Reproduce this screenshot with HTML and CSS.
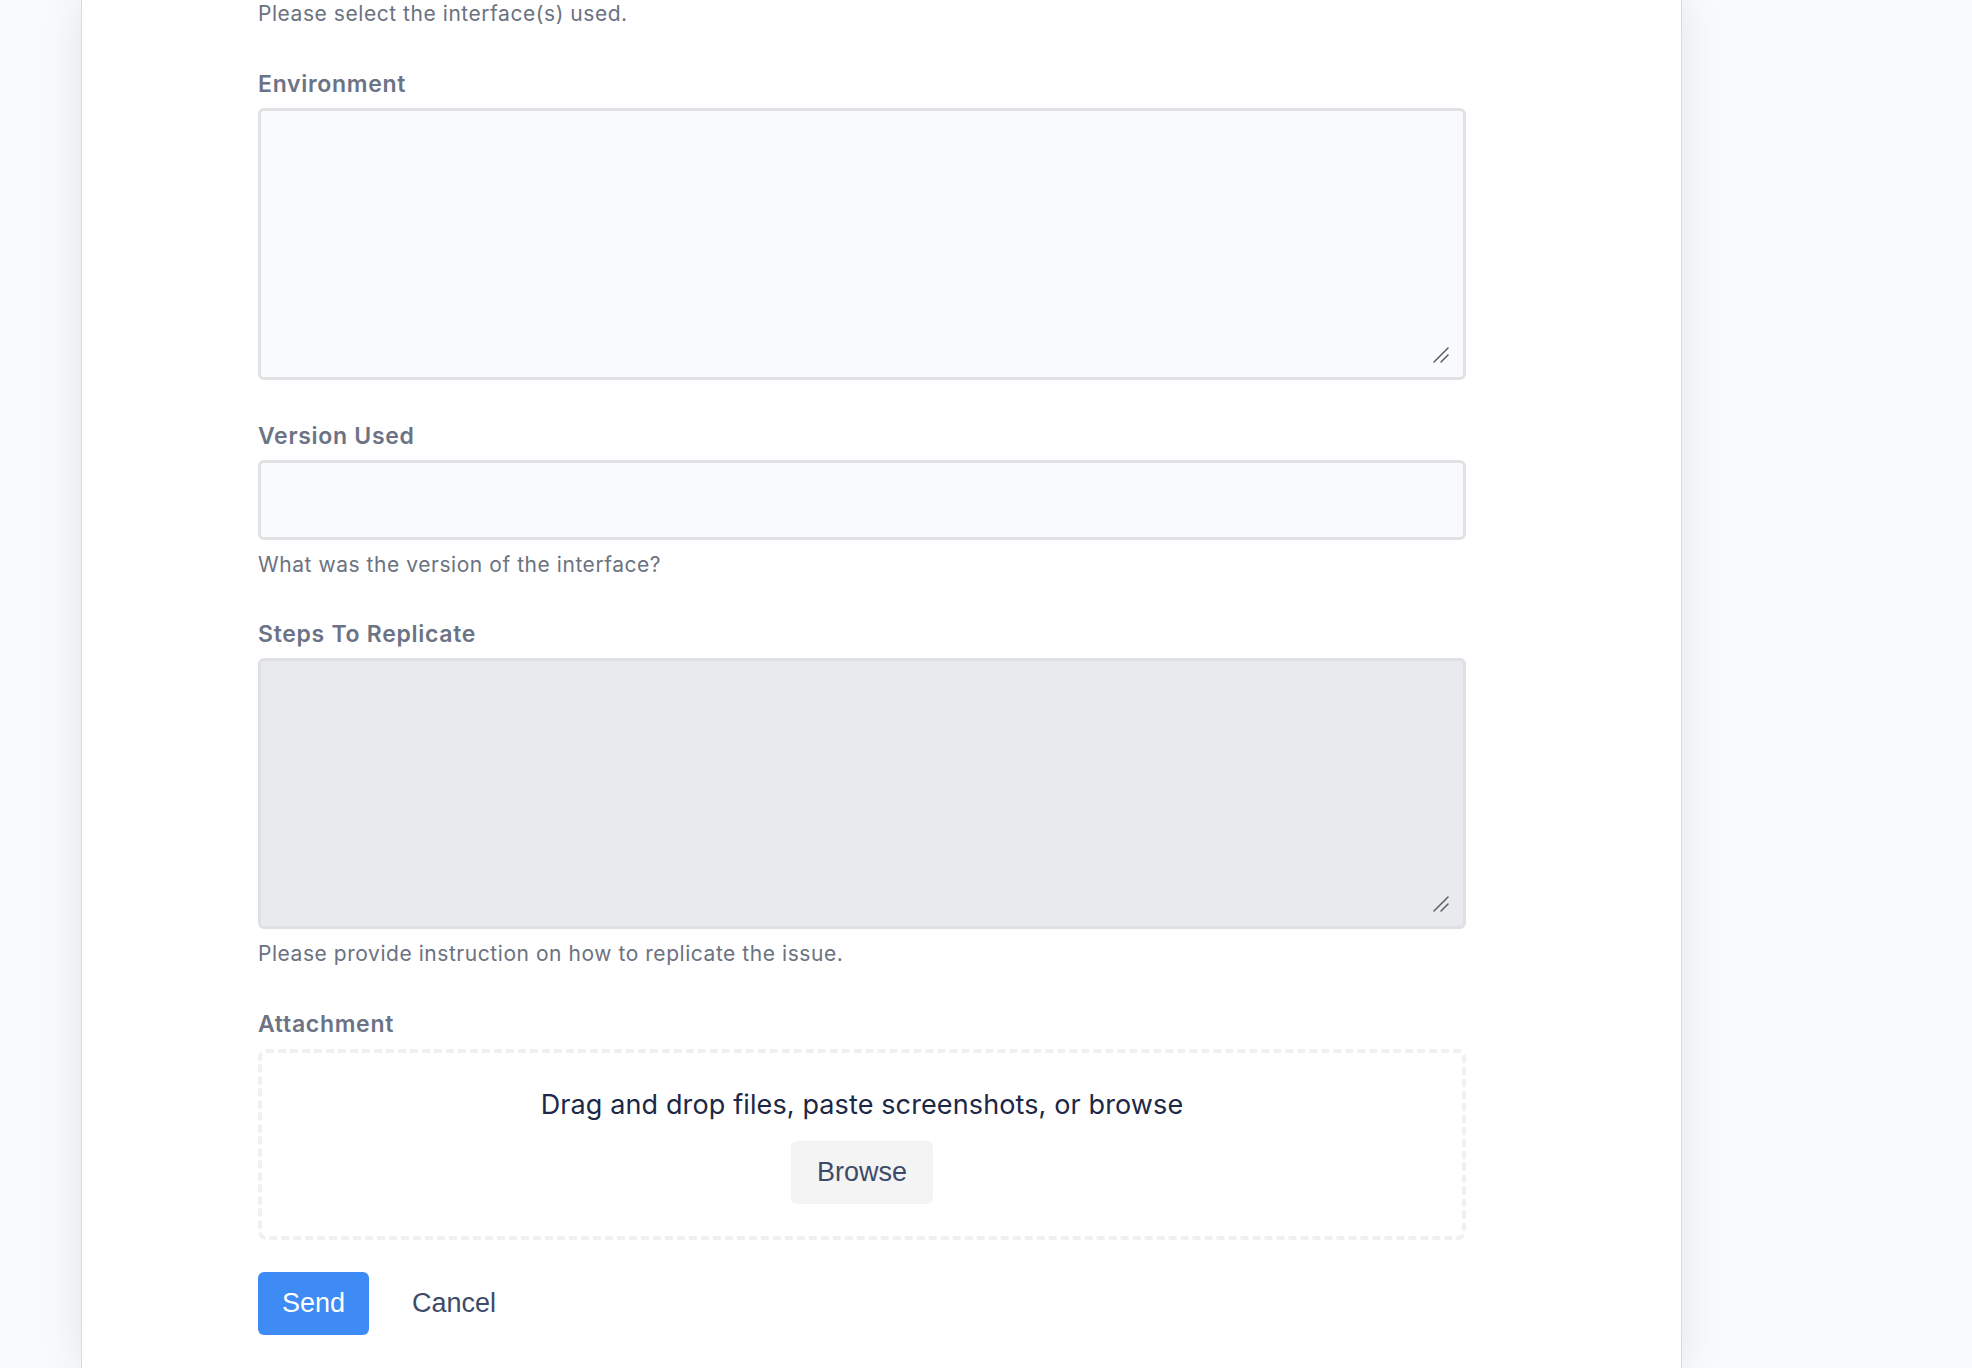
FILE: index.html
```html
<!DOCTYPE html>
<html lang="en">
<head>
<meta charset="utf-8">
<title>Report an issue</title>
<link rel="stylesheet" href="styles.css">
</head>
<body>
<div class="page">
  <main class="panel">
    <form class="form">
      <p class="help help-top">Please select the interface(s) used.</p>

      <div class="field">
        <label class="label" for="env">Environment</label>
        <div class="textarea-wrap">
          <textarea id="env" class="control textarea"></textarea>
          <svg class="grip" viewBox="0 0 16 16" aria-hidden="true">
            <path d="M1 15 L15 1" />
            <path d="M8 15 L15 8" />
          </svg>
        </div>
      </div>

      <div class="field">
        <label class="label" for="ver">Version Used</label>
        <input id="ver" class="control input" type="text">
        <p class="help">What was the version of the interface?</p>
      </div>

      <div class="field field-tight">
        <label class="label" for="steps">Steps To Replicate</label>
        <div class="textarea-wrap">
          <textarea id="steps" class="control textarea textarea-muted"></textarea>
          <svg class="grip" viewBox="0 0 16 16" aria-hidden="true">
            <path d="M1 15 L15 1" />
            <path d="M8 15 L15 8" />
          </svg>
        </div>
        <p class="help">Please provide instruction on how to replicate the issue.</p>
      </div>

      <div class="field">
        <span class="label">Attachment</span>
        <div class="dropzone">
          <p class="drop-text">Drag and drop files, paste screenshots, or browse</p>
          <button type="button" class="btn btn-browse">Browse</button>
        </div>
      </div>

      <div class="actions">
        <button type="button" class="btn btn-primary">Send</button>
        <button type="button" class="btn btn-link">Cancel</button>
      </div>
    </form>
  </main>
</div>
</body>
</html>
```

FILE: styles.css
```css
* {
  box-sizing: border-box;
}

html, body {
  margin: 0;
  padding: 0;
  height: 100%;
  background: #f9fafb;
}

body {
  font-family: Inter, "Noto Sans", "Liberation Sans", sans-serif;
  color: #6b7280;
  overflow: hidden;
}

.page {
  padding-left: 81px;
  min-height: 100%;
}

.panel {
  width: 1601px;
  min-height: 1368px;
  background: #ffffff;
  border-left: 1px solid #d9dadf;
  border-right: 1px solid #d9dadf;
  box-shadow: 0 0 40px rgba(17, 24, 39, 0.09);
  padding-left: 176px;
}

.form {
  width: 1208px;
  display: flex;
  flex-direction: column;
}

.help {
  margin: 11px 0 0;
  font-size: 21px;
  line-height: 28px;
  color: #6b7280;
  letter-spacing: 0.55px;
}

.help-top {
  margin-top: 0;
}

.field {
  display: flex;
  flex-direction: column;
  margin-top: 42px;
}

.field-tight {
  margin-top: 41px;
}

.label {
  display: block;
  font-size: 23px;
  line-height: 28px;
  font-weight: 600;
  color: #6b7385;
  letter-spacing: 0.7px;
  margin-bottom: 10px;
}

.control {
  display: block;
  width: 100%;
  border: 3px solid #e1e2e6;
  border-radius: 6px;
  background: #f9fafb;
  font-family: inherit;
  font-size: 20px;
  color: #1f2937;
  outline: none;
  margin: 0;
}

.textarea-wrap {
  position: relative;
}

.textarea {
  height: 272px;
  padding: 12px 16px;
  resize: none;
}

.textarea-muted {
  height: 271px;
  background: #e9eaee;
  border-color: #dfe0e4;
}

.grip {
  position: absolute;
  right: 17px;
  bottom: 17px;
  width: 16px;
  height: 16px;
  fill: none;
  stroke: #55585e;
  stroke-width: 1.4;
  stroke-linecap: round;
  pointer-events: none;
}

.input {
  height: 80px;
  padding: 0 16px;
}

.dropzone {
  height: 191px;
  margin-top: 1px;
  border: 4px dashed #eff0f2;
  border-radius: 8px;
  padding-top: 35px;
  display: flex;
  flex-direction: column;
  align-items: center;
}

.drop-text {
  margin: 0;
  font-size: 27px;
  line-height: 33px;
  letter-spacing: 0.12px;
  color: #1c2845;
}

.btn {
  font-family: "Liberation Sans", Arial, sans-serif;
  font-size: 27px;
  height: 63px;
  padding: 0 24px;
  border: none;
  border-radius: 6px;
  cursor: pointer;
}

.btn-browse {
  margin-top: 20px;
  width: 142px;
  background: #f4f4f5;
  color: #3e4b68;
}

.actions {
  display: flex;
  align-items: center;
  gap: 19px;
  margin-top: 32px;
}

.btn-primary {
  width: 111px;
  background: #3e8bf6;
  color: #ffffff;
}

.btn-link {
  background: transparent;
  color: #3e4b68;
}
```
